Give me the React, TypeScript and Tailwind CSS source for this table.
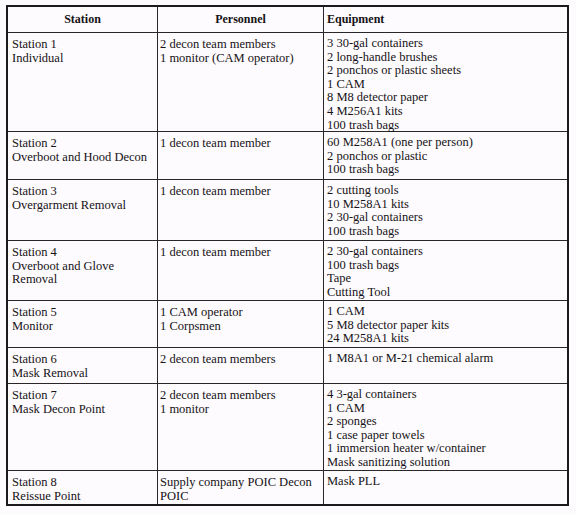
import React from "react";

type Row = {
  station: string[];
  personnel: string[];
  equipment: string[];
  h: string;
};

const rows: Row[] = [
  {
    station: ["Station 1", "Individual"],
    personnel: ["2 decon team members", "1 monitor (CAM operator)"],
    equipment: [
      "3 30-gal containers",
      "2 long-handle brushes",
      "2 ponchos or plastic sheets",
      "1 CAM",
      "8 M8 detector paper",
      "4 M256A1 kits",
      "100 trash bags",
    ],
    h: "h-[99px]",
  },
  {
    station: ["Station 2", "Overboot and Hood Decon"],
    personnel: ["1 decon team member"],
    equipment: ["60 M258A1 (one per person)", "2 ponchos or plastic", "100 trash bags"],
    h: "h-[48px]",
  },
  {
    station: ["Station 3", "Overgarment Removal"],
    personnel: ["1 decon team member"],
    equipment: ["2 cutting tools", "10 M258A1 kits", "2 30-gal containers", "100 trash bags"],
    h: "h-[61px]",
  },
  {
    station: ["Station 4", "Overboot and Glove", "Removal"],
    personnel: ["1 decon team member"],
    equipment: ["2 30-gal containers", "100 trash bags", "Tape", "Cutting Tool"],
    h: "h-[60px]",
  },
  {
    station: ["Station 5", "Monitor"],
    personnel: ["1 CAM operator", "1 Corpsmen"],
    equipment: ["1 CAM", "5 M8 detector paper kits", "24 M258A1 kits"],
    h: "h-[47px]",
  },
  {
    station: ["Station 6", "Mask Removal"],
    personnel: ["2 decon team members"],
    equipment: ["1 M8A1 or M-21 chemical alarm"],
    h: "h-[36px]",
  },
  {
    station: ["Station 7", "Mask Decon Point"],
    personnel: ["2 decon team members", "1 monitor"],
    equipment: [
      "4 3-gal containers",
      "1 CAM",
      "2 sponges",
      "1 case paper towels",
      "1 immersion heater w/container",
      "Mask sanitizing solution",
    ],
    h: "h-[87px]",
  },
  {
    station: ["Station 8", "Reissue Point"],
    personnel: ["Supply company POIC Decon", "POIC"],
    equipment: ["Mask PLL"],
    h: "h-[33px]",
  },
];

const Lines = ({ items }: { items: string[] }) => (
  <>
    {items.map((t) => (
      <div key={t} className="whitespace-nowrap">
        {t}
      </div>
    ))}
  </>
);

export default function App() {
  return (
    <div className="w-[576px] h-[515px] bg-[#fdfbfd] pt-[5px] pl-[6px] font-['Liberation_Serif',serif] text-[12.5px] leading-[13.6px] text-[#161216]">
      <div className="w-[563px] border-2 border-[#1c1a1c]">
        <div className="flex h-[26px] border-b border-[#2a262a] font-bold text-[12px]">
          <div className="w-[150px] border-r border-[#2a262a] flex items-center justify-center pt-[1px]">
            Station
          </div>
          <div className="w-[166px] border-r border-[#2a262a] flex items-center justify-center pt-[1px]">
            Personnel
          </div>
          <div className="flex-1 flex items-center pl-[3px] pt-[1px]">Equipment</div>
        </div>
        {rows.map((r, i) => (
          <div
            key={r.station[0]}
            className={`flex ${r.h} ${i < rows.length - 1 ? "border-b border-[#2a262a]" : ""}`}
          >
            <div className="w-[150px] border-r border-[#2a262a] pl-[4px] pt-[5px]">
              <Lines items={r.station} />
            </div>
            <div className="w-[166px] border-r border-[#2a262a] pl-[2px] pt-[5px]">
              <Lines items={r.personnel} />
            </div>
            <div className="flex-1 pl-[3px] pt-[4px]">
              <Lines items={r.equipment} />
            </div>
          </div>
        ))}
      </div>
    </div>
  );
}
